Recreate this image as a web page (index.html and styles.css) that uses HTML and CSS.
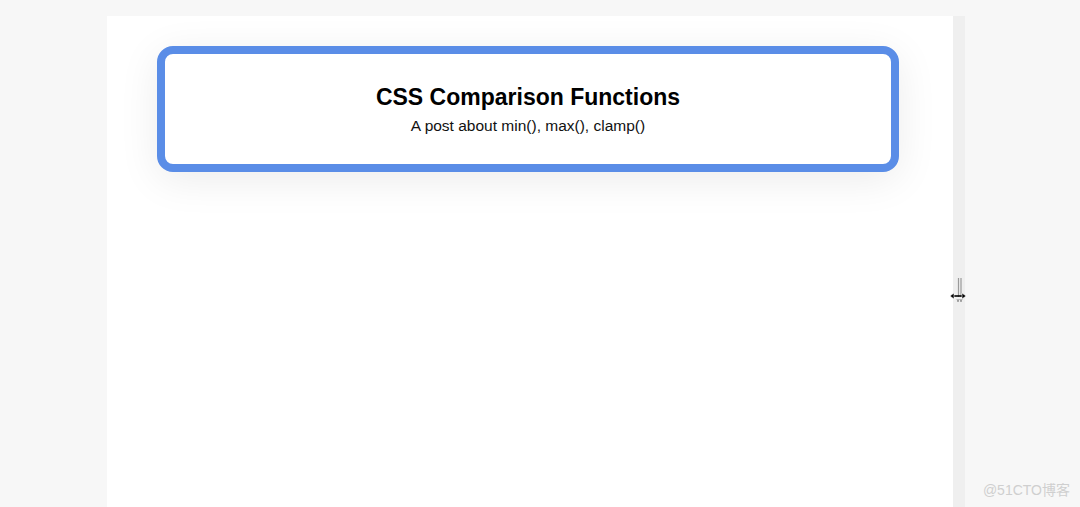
FILE: index.html
```html
<!DOCTYPE html>
<html>
<head>
<meta charset="utf-8">
<link rel="stylesheet" href="styles.css">
</head>
<body>
<div class="stage">
  <div class="frame">
    <div class="card">
      <h1 class="title">CSS Comparison Functions</h1>
      <p class="subtitle">A post about min(), max(), clamp()</p>
    </div>
  </div>
  <div class="handle">
    <svg class="cursor" width="18" height="28" viewBox="0 0 18 28">
      <path d="M9.5 1v19M12 1v19" stroke="#9a9a9a" stroke-width="1.2" fill="none"/>
      <path d="M2 19h14" stroke="#000" stroke-width="1.6"/>
      <path d="M1 19l4-3v6z M17 19l-4-3v6z" fill="#000" stroke="#fff" stroke-width="0.6"/>
      <path d="M8 22l1 3 1-3M11 22l1 3 1-3" stroke="#888" stroke-width="0.8" fill="none"/>
    </svg>
  </div>
  <div class="watermark">@51CTO博客</div>
</div>
</body>
</html>
```
FILE: styles.css
```css
html, body {
  margin: 0;
  padding: 0;
  height: 100%;
  overflow: hidden;
}
body {
  background: #f7f7f7;
  font-family: "Liberation Sans", Arial, sans-serif;
}
.stage {
  display: flex;
  height: 100%;
  padding-left: 107px;
  box-sizing: border-box;
  position: relative;
}
.frame {
  width: 846px;
  margin-top: 16px;
  background: #fff;
  padding: 30px 54px 0 50px;
  box-sizing: border-box;
}
.card {
  width: 742px;
  height: 126px;
  box-sizing: border-box;
  border: 8px solid #5a8de7;
  border-radius: 16px;
  background: #fff;
  box-shadow: 0 8px 40px rgba(0, 0, 0, 0.08);
  text-align: center;
  padding-top: 31px;
}
.title {
  margin: 0;
  font-size: 23px;
  font-weight: bold;
  color: #000;
  line-height: 24px;
}
.subtitle {
  margin: 8px 0 0;
  font-size: 15.5px;
  color: #111;
  line-height: 18px;
}
.handle {
  width: 12px;
  margin-top: 16px;
  background: #efefef;
  position: relative;
}
.cursor {
  position: absolute;
  left: -4px;
  top: 261px;
}
.watermark {
  position: absolute;
  right: 10px;
  bottom: 8px;
  font-size: 14px;
  color: #cfcfcf;
  font-family: "Liberation Sans", "Noto Sans CJK SC", sans-serif;
}
```
